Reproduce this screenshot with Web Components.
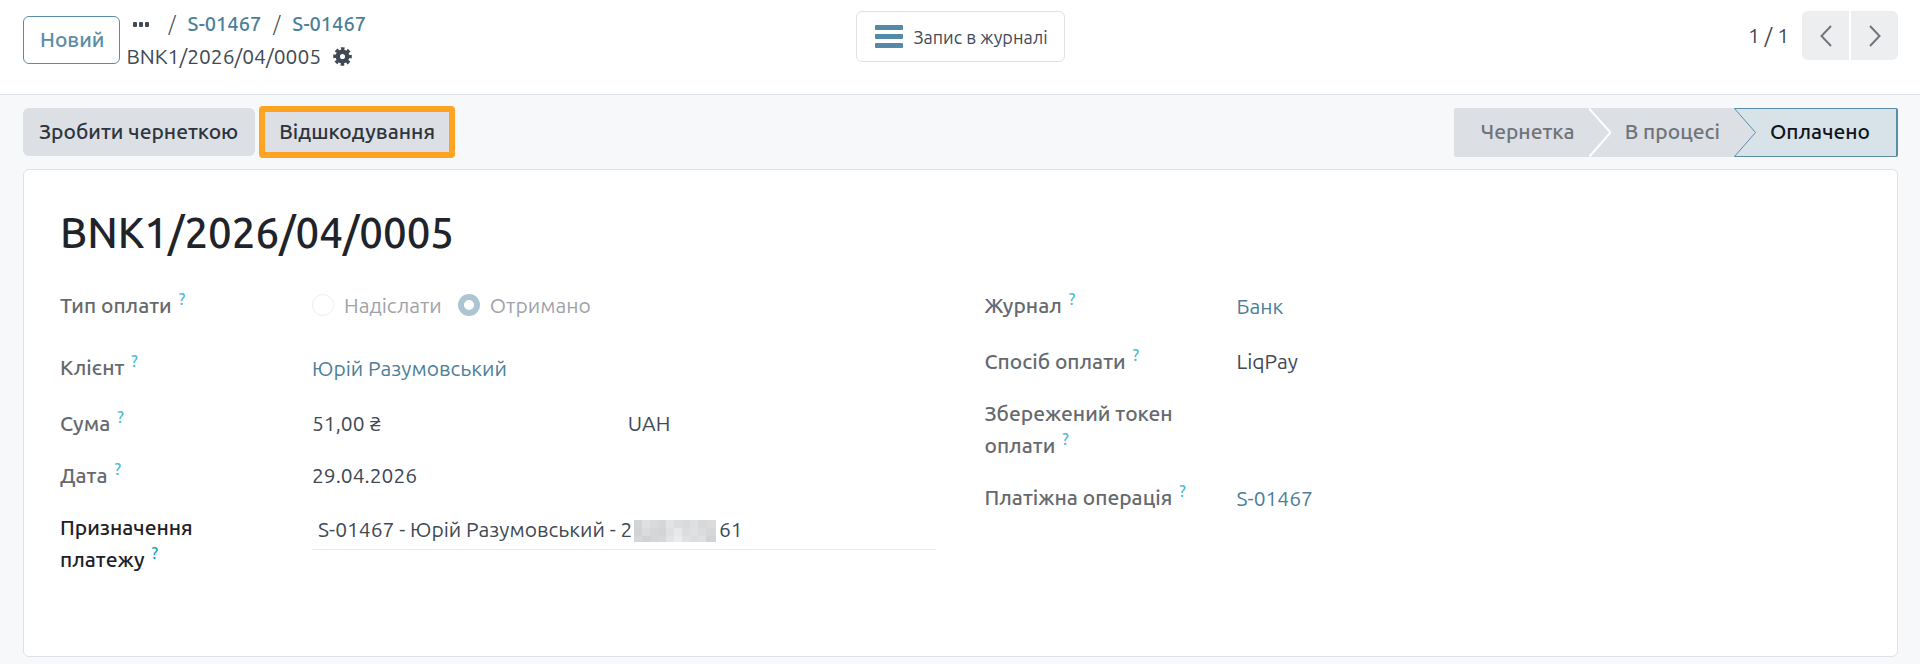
<!DOCTYPE html>
<html lang="uk">
<head>
<meta charset="utf-8">
<title>BNK1/2026/04/0005</title>
<style>
    body {
        margin: 0;
        background: #f7f8fa;
        color: #414954;
        font: 21px/32px Ubuntu, "Noto Sans", sans-serif;
        --link: #4c7f99;
        --accent: #5b8ca7;
        --line: #dde2e8;
        --grey: #dcdfe4;
    }
    a {
        color: var(--link);
        text-decoration: none;
    }
</style>
</head>
<body>
    <control-panel>
        <a slot="crumb" href="#payment">S-01467</a>
        <a slot="crumb2" href="#order">S-01467</a>
        <span slot="current">BNK1/2026/04/0005</span>
        <stat-button slot="stats">Запис в журналі</stat-button>
        <record-pager slot="pager" current="1" total="1"></record-pager>
    </control-panel>

    <status-bar>
        <action-button slot="actions">Зробити чернеткою</action-button>
        <action-button slot="actions" marked>Відшкодування</action-button>
        <status-step first>Чернетка</status-step>
        <status-step>В процесі</status-step>
        <status-step active>Оплачено</status-step>
    </status-bar>

    <form-sheet>
        <span slot="title">BNK1/2026/04/0005</span>
        <field-group>
            <radio-field label="Тип оплати" options="Надіслати,Отримано" value="Отримано"></radio-field>
            <form-field label="Клієнт" link><a href="#partner">Юрій Разумовський</a></form-field>
            <form-field label="Сума" split>51,00 ₴<span slot="second">UAH</span></form-field>
            <form-field label="Дата">29.04.2026</form-field>
            <memo-field label="Призначення платежу" start="S-01467 - Юрій Разумовський - 2" end="61"></memo-field>
        </field-group>
        <field-group slot="right">
            <form-field label="Журнал" link><a href="#journal">Банк</a></form-field>
            <form-field label="Спосіб оплати">LiqPay</form-field>
            <form-field label="Збережений токен оплати"></form-field>
            <form-field label="Платіжна операція" link><a href="#transaction">S-01467</a></form-field>
        </field-group>
    </form-sheet>

<script>
class ControlPanel extends HTMLElement {
    constructor() {
        super();
        this.attachShadow({mode: "open"}).innerHTML = `
            <style>
                :host {
                    display: grid;
                    grid-template-columns: 1fr auto 1fr;
                    align-items: start;
                    padding: 8px 22px 22px 23px;
                    background: #fff;
                    border-bottom: 1px solid var(--line);
                }
                .left {
                    display: flex;
                    gap: 6px;
                }
                .new {
                    height: 48px;
                    margin: 8px 0 0;
                    padding: 0 15px 2px 16px;
                    border: 1px solid var(--accent);
                    border-radius: 6px;
                    background: #fff;
                    color: var(--accent);
                    font: inherit;
                    font-weight: 500;
                }
                .row {
                    display: flex;
                    align-items: center;
                    height: 32px;
                }
                .path {
                    gap: 12px;
                    font-size: 20px;
                    font-weight: 500;
                }
                .sep {
                    font-weight: 300;
                }
                .icon {
                    display: flex;
                    padding: 0;
                    border: 0;
                    background: none;
                    color: #414954;
                }
                .dots {
                    margin: 0 7px;
                }
                .gear {
                    margin-left: 12px;
                }
                .pager {
                    justify-self: end;
                    margin-top: 3px;
                }
                .stats {
                    margin-top: 3px;
                }
            </style>
            <div class="left">
                <button class="new">Новий</button>
                <nav>
                    <div class="row path">
                        <button class="icon dots" aria-label="Більше">
                            <svg width="16" height="5" fill="currentColor">
                                <rect width="4" height="5" rx="1"/>
                                <rect x="6" width="4" height="5" rx="1"/>
                                <rect x="12" width="4" height="5" rx="1"/>
                            </svg>
                        </button>
                        <span class="sep">/</span><slot name="crumb"></slot>
                        <span class="sep">/</span><slot name="crumb2"></slot>
                    </div>
                    <div class="row">
                        <slot name="current"></slot>
                        <button class="icon gear" aria-label="Дії">
                            <svg width="19" height="19" viewBox="0 0 20 20">
                                <g fill="none" stroke="currentColor">
                                    <circle cx="10" cy="10" r="5" stroke-width="4.6"/>
                                    <circle cx="10" cy="10" r="8.2" stroke-width="3.2" stroke-dasharray="3.7 2.74" stroke-dashoffset="1.85"/>
                                </g>
                            </svg>
                        </button>
                    </div>
                </nav>
            </div>
            <div class="stats"><slot name="stats"></slot></div>
            <div class="pager"><slot name="pager"></slot></div>
        `;
    }
}

class StatButton extends HTMLElement {
    constructor() {
        super();
        this.attachShadow({mode: "open"}).innerHTML = `
            <style>
                :host {
                    display: block;
                }
                button {
                    display: flex;
                    align-items: center;
                    gap: 10px;
                    height: 51px;
                    padding: 0 16px 0 18px;
                    border: 1px solid var(--line);
                    border-radius: 6px;
                    background: #fff;
                    color: inherit;
                    font: inherit;
                    font-size: 18px;
                }
            </style>
            <button>
                <svg width="28" height="23" fill="#5489a7">
                    <rect width="28" height="5" rx="1"/>
                    <rect y="9" width="28" height="5" rx="1"/>
                    <rect y="18" width="28" height="5" rx="1"/>
                </svg>
                <slot></slot>
            </button>
        `;
    }
}

class RecordPager extends HTMLElement {
    connectedCallback() {
        this.attachShadow({mode: "open"}).innerHTML = `
            <style>
                :host {
                    display: flex;
                    align-items: center;
                }
                span {
                    margin-right: 13px;
                    line-height: 49px;
                }
                button {
                    display: flex;
                    align-items: center;
                    justify-content: center;
                    width: 47px;
                    height: 49px;
                    padding: 0;
                    border: 0;
                    border-radius: 6px 0 0 6px;
                    background: #edeef0;
                    color: #73777d;
                }
                button + button {
                    margin-left: 2px;
                    border-radius: 0 6px 6px 0;
                }
                svg {
                    fill: none;
                    stroke: currentColor;
                    stroke-width: 2;
                }
            </style>
            <span>${this.getAttribute("current")} / ${this.getAttribute("total")}</span>
            <button aria-label="Попередній"><svg width="12" height="22"><path d="M11 1 1.500 11 11 21"/></svg></button>
            <button aria-label="Наступний"><svg width="12" height="22"><path d="M1 1 10.500 11 1 21"/></svg></button>
        `;
    }
}

class StatusBar extends HTMLElement {
    constructor() {
        super();
        this.attachShadow({mode: "open"}).innerHTML = `
            <style>
                :host {
                    display: flex;
                    justify-content: space-between;
                    align-items: center;
                    padding: 11px 22px 11px 23px;
                }
                div {
                    display: flex;
                    align-items: center;
                }
                .actions {
                    gap: 4px;
                }
            </style>
            <div class="actions"><slot name="actions"></slot></div>
            <div><slot></slot></div>
        `;
    }
}

class ActionButton extends HTMLElement {
    constructor() {
        super();
        this.attachShadow({mode: "open"}).innerHTML = `
            <style>
                :host {
                    display: block;
                }
                button {
                    display: block;
                    height: 48px;
                    padding: 0 17px 2px 16px;
                    border: 0;
                    border-radius: 6px;
                    background: var(--grey);
                    color: #2e343c;
                    font: inherit;
                    font-weight: 500;
                }
                :host([marked]) button {
                    height: 52px;
                    padding: 0 14px 2px;
                    border: 6px solid #ffa422;
                    border-radius: 4px;
                }
            </style>
            <button><slot></slot></button>
        `;
    }
}

class StatusStep extends HTMLElement {
    connectedCallback() {
        const active = this.hasAttribute("active");
        const notch = this.hasAttribute("first") ? "" : `
            <svg width="22" height="49">
                <path class="fill" d="M0 0H22V49H0L21 24.500Z"/>
                <path class="back" d="M0 0 21 24.500 0 49Z"/>
                <path class="edge" d="M${active ? "22 .5H" : "0 "}.5L21.500 24.500.5 48.500${active ? "H22" : ""}"/>
            </svg>`;
        this.attachShadow({mode: "open"}).innerHTML = `
            <style>
                :host {
                    display: flex;
                    --fill: var(--grey);
                    --edge: #fff;
                }
                :host([active]) {
                    --fill: #d8e2e9;
                    --edge: var(--accent);
                }
                svg {
                    display: block;
                }
                .fill {
                    fill: var(--fill);
                }
                .back {
                    fill: var(--grey);
                }
                .edge {
                    fill: none;
                    stroke: var(--edge);
                    stroke-width: ${active ? 1 : 2};
                }
                button {
                    height: 49px;
                    padding: 0 14px 2px;
                    border: 0;
                    background: var(--fill);
                    color: #6f747b;
                    font: inherit;
                    font-weight: 500;
                }
                :host([first]) button {
                    padding-left: 27px;
                    border-radius: 2px 0 0 2px;
                }
                :host([active]) button {
                    padding-right: 26px;
                    border: solid var(--accent);
                    border-width: 1px 2px 1px 0;
                    border-radius: 0 2px 2px 0;
                    color: #111418;
                }
            </style>
            ${notch}
            <button><slot></slot></button>
        `;
    }
}

class FormSheet extends HTMLElement {
    constructor() {
        super();
        this.attachShadow({mode: "open"}).innerHTML = `
            <style>
                :host {
                    display: block;
                    margin: 0 22px 8px 23px;
                    padding: 38px 37px 81px 36px;
                    border: 1px solid var(--line);
                    border-radius: 6px;
                    background: #fff;
                }
                h1 {
                    margin: 0 0 31px;
                    color: #1f242a;
                    font-size: 42px;
                    font-weight: 500;
                    line-height: 50px;
                }
                .groups {
                    display: grid;
                    grid-template-columns: 1fr 1fr;
                    gap: 49px;
                }
            </style>
            <h1><slot name="title"></slot></h1>
            <div class="groups">
                <slot></slot>
                <slot name="right"></slot>
            </div>
        `;
    }
}

class FieldGroup extends HTMLElement {
    constructor() {
        super();
        this.attachShadow({mode: "open"}).innerHTML = `
            <style>
                :host {
                    display: flex;
                    flex-direction: column;
                    gap: 20px;
                }
            </style>
            <slot></slot>
        `;
    }
}

// label column and help mark, shared by every kind of field
const fieldStyle = `
    :host {
        display: grid;
        grid-template-columns: 212px 1fr;
        column-gap: 40px;
        align-items: start;
    }
    .label {
        color: #666a6f;
        font-weight: 500;
    }
    sup {
        margin-left: 2px;
        color: #4fbdd2;
        font-size: 16px;
        line-height: 0;
        vertical-align: 8px;
    }
`;

class FormField extends HTMLElement {
    connectedCallback() {
        this.attachShadow({mode: "open"}).innerHTML = `
            <style>
                ${fieldStyle}
                .value {
                    display: grid;
                    column-gap: 8px;
                }
                :host([split]) .value {
                    grid-template-columns: 1fr 1fr;
                }
                :host([link]) .value {
                    padding: 1px 0 3px;
                }
            </style>
            <div class="label">${this.getAttribute("label")} <sup>?</sup></div>
            <div class="value"><div><slot></slot></div><slot name="second"></slot></div>
        `;
    }
}

class RadioField extends HTMLElement {
    connectedCallback() {
        const value = this.getAttribute("value");
        const options = this.getAttribute("options").split(",").map(name => `
            <label><input type="radio" name="option" disabled ${name === value ? "checked" : ""}>${name}</label>
        `).join("");
        this.attachShadow({mode: "open"}).innerHTML = `
            <style>
                ${fieldStyle}
                .options {
                    display: flex;
                    gap: 16px;
                    height: 42px;
                }
                label {
                    display: flex;
                    align-items: center;
                    gap: 10px;
                    height: 32px;
                    color: #9fa3a9;
                }
                input {
                    appearance: none;
                    box-sizing: border-box;
                    width: 22px;
                    height: 22px;
                    margin: 0;
                    border: 1px solid #eceef0;
                    border-radius: 50%;
                    background: #fff;
                }
                input:checked {
                    border: 6px solid #adc5d3;
                }
            </style>
            <div class="label" id="label">${this.getAttribute("label")} <sup>?</sup></div>
            <div class="options" role="radiogroup" aria-labelledby="label">${options}</div>
        `;
    }
}

class MemoField extends HTMLElement {
    connectedCallback() {
        const tones = [
            "#d3d4d6", "#dfe0e1", "#d9dadb", "#d6d7d8", "#e2e3e4", "#dcddde", "#d9dadc", "#dedfe0", "#d7d8da", "#dadbdc",
            "#d2d3d5", "#dadbdd", "#d5d6d8", "#d3d4d6", "#dfe0e2", "#e6e8e9", "#dcddde", "#dfe0e2", "#dbdcde", "#d6d7d9",
            "#d6d7d9", "#d1d2d4", "#d5d6d8", "#d7d8da", "#e3e4e6", "#ebecee", "#e0e1e3", "#dcdddf", "#dfe0e1", "#d2d3d5"
        ];
        const cells = tones.map((tone, i) =>
            `<rect x="${i % 10 * 8}" y="${Math.floor(i / 10) * 8}" width="10" height="8" fill="${tone}"/>`
        ).join("");
        const gap = "\u00a0".repeat(18);
        this.attachShadow({mode: "open"}).innerHTML = `
            <style>
                ${fieldStyle}
                .label {
                    color: #1c2127;
                }
                sup {
                    color: #17a2b8;
                }
                .box {
                    position: relative;
                }
                input {
                    display: block;
                    box-sizing: border-box;
                    width: 100%;
                    height: 39px;
                    padding: 0 6px 2px;
                    border: 0;
                    border-bottom: 1px solid #e6e8ea;
                    background: none;
                    color: inherit;
                    font: inherit;
                }
                /* mosaic over the hidden digits */
                svg {
                    position: absolute;
                    top: 9px;
                    left: 322px;
                }
            </style>
            <label class="label" for="memo">${this.getAttribute("label")} <sup>?</sup></label>
            <div class="box">
                <input id="memo" value="${this.getAttribute("start")}${gap}${this.getAttribute("end")}">
                <svg width="82" height="22">${cells}</svg>
            </div>
        `;
    }
}

customElements.define("control-panel", ControlPanel);
customElements.define("stat-button", StatButton);
customElements.define("record-pager", RecordPager);
customElements.define("status-bar", StatusBar);
customElements.define("action-button", ActionButton);
customElements.define("status-step", StatusStep);
customElements.define("form-sheet", FormSheet);
customElements.define("field-group", FieldGroup);
customElements.define("form-field", FormField);
customElements.define("radio-field", RadioField);
customElements.define("memo-field", MemoField);
</script>
</body>
</html>
